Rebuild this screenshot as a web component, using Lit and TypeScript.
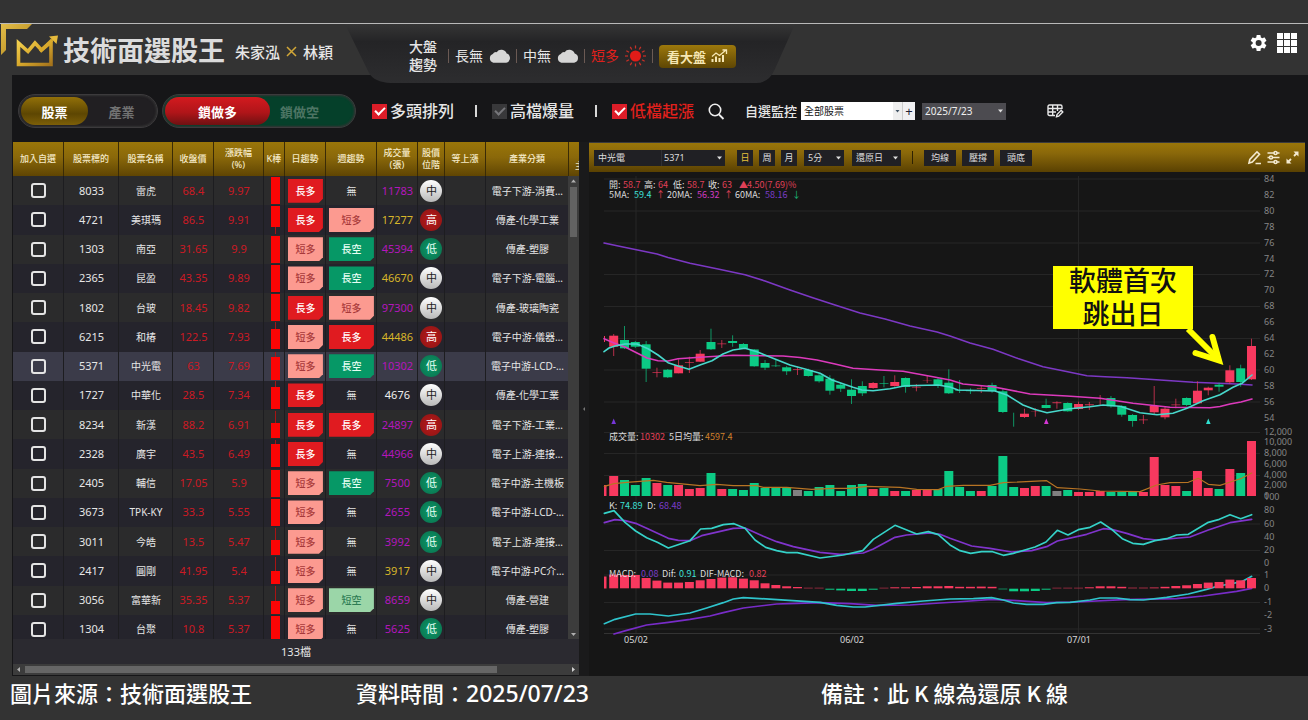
import { LitElement, html, svg, css } from "lit";
import { customElement, state } from "lit/decorators.js";
import { classMap } from "lit/directives/class-map.js";

type Row = {
  code: string; name: string; price: string; pct: string;
  k: [number, number, number, number];
  day: string; week: string; vol: string; volColor: string; level: string; sector: string;
};

const r = (
  code: string, name: string, price: string, pct: string, k: [number, number, number, number],
  day: string, week: string, vol: string, volColor: string, level: string, sector: string,
): Row => ({ code, name, price, pct, k, day, week, vol, volColor, level, sector });

const ROWS: Row[] = [
  r("8033", "雷虎", "68.4", "9.97", [1, 1, 28, 28], "長多", "無", "11783", "mag", "中", "電子下游-消費…"),
  r("4721", "美琪瑪", "86.5", "9.91", [1, 1, 22, 29], "長多", "短多", "17277", "yel", "高", "傳產-化學工業"),
  r("1303", "南亞", "31.65", "9.9", [1, 1, 28, 28], "短多", "長空", "45394", "mag", "低", "傳產-塑膠"),
  r("2365", "昆盈", "43.35", "9.89", [1, 1, 28, 28], "短多", "長空", "46670", "yel", "中", "電子下游-電腦…"),
  r("1802", "台玻", "18.45", "9.82", [1, 1, 28, 28], "長多", "短多", "97300", "mag", "中", "傳產-玻璃陶瓷"),
  r("6215", "和椿", "122.5", "7.93", [0, 7, 27, 27], "短多", "長多", "44486", "yel", "高", "電子中游-儀器…"),
  r("5371", "中光電", "63", "7.69", [0, 5, 28, 28], "短多", "長空", "10302", "mag", "低", "電子中游-LCD-…"),
  r("1727", "中華化", "28.5", "7.34", [0, 6, 28, 28], "長多", "無", "4676", "whi", "中", "傳產-化學工業"),
  r("8234", "新漢", "88.2", "6.91", [1, 13, 28, 28], "長多", "長多", "24897", "mag", "高", "電子下游-工業…"),
  r("2328", "廣宇", "43.5", "6.49", [1, 5, 28, 28], "長多", "無", "44966", "mag", "中", "電子上游-連接…"),
  r("2405", "輔信", "17.05", "5.9", [1, 1, 28, 28], "短多", "長空", "7500", "mag", "低", "電子中游-主機板"),
  r("3673", "TPK-KY", "33.3", "5.55", [1, 1, 28, 28], "短多", "無", "2655", "mag", "低", "電子中游-LCD-…"),
  r("3011", "今皓", "13.5", "5.47", [1, 13, 28, 28], "短多", "無", "3992", "mag", "低", "電子上游-連接…"),
  r("2417", "圓剛", "41.95", "5.4", [1, 15, 28, 28], "短多", "無", "3917", "yel", "中", "電子中游-PC介…"),
  r("3056", "富華新", "35.35", "5.37", [0, 15, 28, 28], "短多", "短空", "8659", "mag", "中", "傳產-營建"),
  r("1304", "台聚", "10.8", "5.37", [1, 1, 28, 28], "短多", "無", "5625", "mag", "低", "傳產-塑膠"),
];

const COLS = [51, 55, 54, 41, 50, 21, 41, 51, 41, 27, 41, 83, 10];
const HEADS = ["加入自選", "股票標的", "股票名稱", "收盤價", "漲跌幅\n(%)", "K棒", "日趨勢", "週趨勢", "成交量\n(張)", "股價\n位階", "等上漲", "產業分類", "主"];

const RED = "#f8395f";
const GREEN = "#0ccb85";

/* candle: colour, wick top, wick bottom, body top, body bottom */
const CANDLES: [string, number, number, number, number][] = [
  ["r", 334, 356, 335.7, 346.7], ["g", 326, 349, 340, 348.3], ["g", 341, 348, 342, 346.7], ["g", 341, 382, 344.3, 368.7],
  ["r", 367.7, 377.3, 372, 373], ["g", 369, 378, 369.7, 377.3], ["r", 359.3, 373.3, 365.3, 373.3], ["r", 356.7, 373, 362, 363],
  ["r", 350, 362, 353.7, 361.7], ["g", 328.7, 350, 342, 349.3], ["r", 340, 348, 343.3, 344.3], ["g", 335.3, 346.7, 341, 343],
  ["g", 343, 349, 344, 348.7], ["g", 349, 366.7, 349.5, 366.3], ["g", 360, 370, 363, 367.7], ["g", 360, 367, 365.3, 366.3],
  ["g", 366, 375, 367.3, 371.3], ["r", 366.7, 375, 369, 370], ["g", 368.7, 376.7, 370, 376], ["g", 373.3, 382.7, 375.3, 381.3],
  ["g", 375.3, 394.7, 378.7, 390.7], ["g", 382.7, 392, 384.7, 388.7], ["g", 379.3, 404, 389.7, 396], ["g", 381.3, 396, 386, 393.3],
  ["r", 382, 388.7, 383, 388], ["g", 376, 387.3, 383, 384], ["r", 375.3, 386.7, 382, 386], ["g", 377.3, 392.7, 378, 387],
  ["r", 384, 391.3, 386.7, 387.7], ["r", 375, 383, 380, 380.4], ["g", 378, 388, 379.3, 386], ["g", 369.3, 394, 382.7, 393.3],
  ["g", 380, 393, 390, 391], ["g", 388.3, 394, 390.3, 391.3], ["r", 385, 393, 388, 389], ["g", 382.7, 392.7, 385, 391],
  ["g", 388.3, 413, 391.3, 412], ["g", 412.7, 426.7, 426, 426], ["r", 408.7, 418, 413.7, 417], ["r", 408, 416.7, 411, 411.4],
  ["g", 398.7, 408.3, 405, 408], ["r", 401.3, 408.7, 402, 403.3], ["g", 402.3, 411.7, 403, 411.3], ["r", 401.7, 410, 404, 409],
  ["r", 402, 410, 404, 405.3], ["r", 395, 406, 404, 404], ["g", 396, 407.7, 398, 406.3], ["g", 405, 416.7, 406, 414.7],
  ["g", 414, 426.7, 415, 421], ["r", 415, 424, 419.3, 420.3], ["r", 386, 414.7, 406, 412.3], ["r", 406.7, 419.3, 408.7, 417.3],
  ["r", 398.7, 408.3, 404.3, 405.3], ["g", 397.3, 406, 398, 405], ["r", 381.3, 404, 390.7, 403.3], ["r", 386.7, 395.3, 387.7, 390.3],
  ["g", 382.7, 391.7, 384.7, 386.7], ["r", 365.3, 384, 370.3, 382.3], ["g", 364.7, 386.7, 368.3, 382], ["r", 338.7, 380, 346, 379.3],
];

const MA60 = "604,243 623,247 657,254 668,257.5 690,263.3 718,269 745,274.7 765,281 790,290 812,297.5 835,305 860,313 885,319 910,326 937,332 950,336 970,343 993,349.3 1018,358.5 1043,366.7 1064,371 1087,375.7 1105,376.7 1127,377.7 1160,380 1193,382.3 1237,384 1252,385";
const MA20 = "604,338.7 614,343 625,347 637,353 647,358 658,360.7 668,361 678,358.7 700,357.3 733,355.3 783,356 800,357.5 817,360 835,364 853,368.3 880,370 903,371.3 933,376.7 950,380 963,384 993,386.7 1030,394 1067,396 1100,398.3 1133,403.3 1170,407.3 1210,407.7 1220,406.5 1230,404 1241,402 1252,399";
const MA5 = "604,351.7 609,348 615,346 625,344 637,344 648,348.7 658,355 668,362.7 678,366 689,369.3 700,365 712,360.7 723,354 733,350 745,348.3 757,351.7 773,358.3 790,365 805,369 820,373.3 832,380 853,387.3 862,390 873,390.7 890,388.7 905,385.7 938,385 950,387 958,390 995,391 1007,395 1023,405 1035,409.5 1047,412.7 1070,408.7 1090,406.7 1103,405 1120,406.3 1140,412.7 1157,414.7 1173,413.3 1187,408.3 1203,400.7 1220,394.7 1233,387.3 1242,383.3 1252,375";

const VOLUMES = "r20 g16 g11 g18 r13 g11 r11 r7 r8 g23 r7 g7 g6 g13 g8 g8 g8 x6 g5 g9 g11 g5 g11 g12 r7 g8 r5 g5 r6 r7 g7 g25 g9 g5 r5 g10 g40 g9 r8 r10 g10 x5 g6 r4 r4 r5 g4 g4 g5 r4 r39 r11 r10 g5 r25 r8 g7 r27 g23 r55".split(" ");
const MACD_BARS = [13.7, 13.3, 13.3, 10.3, 7.7, 5.7, 5.7, 6.3, 8, 9.3, 10.7, 11, 9.7, 8, 5, 3.3, 2, 1.3, 0.5, 0.5, -1, -1.7, -2.3, -2.3, -1, 0.5, 1, 1, 1.3, 2, 2, 2.3, 1.5, 1.5, 1.7, 1.5, -0.6, -2.6, -2.6, -2.3, -1, 0.5, 0.5, 0.5, 1, 2, 2, 1.5, 0.6, 0.6, 0.8, 1.5, 2.3, 3, 4.3, 5.7, 6.3, 8.7, 8, 10.3];

/* indicator traces are kept in thirds of a pixel, measured from (590, 425) */
const VOL_MA = "43,184 72,176 110,172 190,166 230,172 330,182 380,178 430,182 500,182 520,187 590,187 665,193 730,190 780,190 830,184 930,187 980,193 1045,194 1070,184 1120,181 1200,181 1240,173 1370,167 1402,188 1470,192 1530,198 1650,200 1700,180 1740,173 1795,172 1825,160 1855,178 1890,181 1930,168 1955,160 1985,144";
const K_LINE = "43,265 72,257 105,292 137,318 170,338 202,352 235,369 300,347 332,312 365,310 400,299 432,296 465,310 495,345 527,367 560,377 590,383 622,383 690,399 760,390 818,377 850,343 915,301 980,327 1015,320 1045,329 1080,360 1110,377 1142,385 1175,380 1208,380 1240,391 1270,385 1335,366 1368,351 1402,316 1434,330 1465,314 1500,307 1532,291 1565,313 1597,341 1628,355 1660,358 1695,347 1730,341 1760,330 1795,328 1855,292 1888,283 1920,269 1952,281 1985,269";
const D_LINE = "43,293 75,284 105,287 140,296 170,310 235,340 265,346 300,347 335,332 430,310 465,309 520,334 560,350 610,365 690,382 750,388 820,384 850,372 915,337 950,330 1020,324 1050,328 1080,340 1145,363 1200,370 1265,381 1325,377 1370,365 1402,348 1490,328 1540,311 1565,313 1610,325 1660,341 1700,345 1800,336 1855,315 1920,293 1985,283";
const DIF_LINE = "43,596 75,583 137,567 180,567 235,573 300,564 350,549 400,533 430,522 460,518 550,523 690,532 740,541 790,546 825,546 920,535 1000,528 1080,522 1150,521 1205,518 1240,525 1270,534 1310,538 1360,538 1400,533 1440,532 1500,525 1530,519 1580,519 1620,524 1660,525 1730,517 1795,507 1850,493 1885,483 1920,477 1955,470 1985,454";
const MACD_LINE = "72,627 110,616 170,600 235,592 300,583 360,573 400,563 460,549 560,537 620,535 690,533 780,536 860,541 960,540 1050,534 1100,531 1205,523 1280,527 1370,533 1460,531 1600,524 1760,521 1840,513 1940,499 1985,490";

const barX = (i: number) => 613.7 + 10.81 * i;
const tone = (c: string) => (c === "r" ? RED : c === "g" ? GREEN : "#808080");

const LABELS: [number, [number, string, string][]][] = [
  [188, [[609, "開:", "#ddd"], [623, "58.7", "#e04058"], [644, "高:", "#ddd"], [658, "64", "#e04058"], [673, "低:", "#ddd"], [687, "58.7", "#e04058"], [708, "收:", "#ddd"], [722, "63", "#e04058"], [739, "▲", "#e04058"], [747, "4.50(7.69)%", "#e04058"]]],
  [198, [[609, "5MA:", "#ddd"], [634, "59.4", "#3fe0d8"], [656, "↑", "#e04058"], [667, "20MA:", "#ddd"], [697, "56.32", "#d03cc0"], [724, "↑", "#e04058"], [735, "60MA:", "#ddd"], [765, "58.16", "#7a3cc8"], [792, "↓", "#19b87a"]]],
  [440, [[609, "成交量:", "#ddd"], [640, "10302", "#e04058"], [669, "5日均量:", "#ddd"], [705, "4597.4", "#d0802c"]]],
  [509, [[609, "K:", "#ddd"], [620, "74.89", "#3fe0d8"], [647, "D:", "#ddd"], [659, "68.48", "#7a3cc8"]]],
  [577, [[609, "MACD:", "#ddd"], [641, "0.08", "#7a3cc8"], [662, "Dif:", "#ddd"], [679, "0.91", "#3fe0d8"], [700, "DIF-MACD:", "#ddd"], [749, "0.82", "#e04058"]]],
];

const AXIS: [number, string][] = [
  ...Array.from({ length: 16 }, (_, i): [number, string] => [179 + i * 15.9, String(84 - i * 2)]),
  [432, "12,000"], [442, "10,000"], [453, "8,000"], [464, "6,000"], [475, "4,000"], [485, "2,000"], [496, "0"], [497, "100"],
  [510, "80"], [524, "60"], [537, "40"], [550, "20"], [563, "0"],
  [575, "1"], [588, "0"], [602, "-1"], [615, "-2"], [629, "-3"],
];

@customElement("stock-chart")
export class StockChart extends LitElement {
  static styles = css`
    :host { display: block; }
    .plot { display: block; width: 100%; height: auto; }
    .label { font: 9px/9px "Noto Sans CJK TC", sans-serif; }
    .axis { font: 9px "Noto Sans", sans-serif; fill: #858585; }
    .date { font: 9px "Noto Sans", sans-serif; fill: #d8d8d8; }
    .note { font: 500 27px "Noto Sans CJK TC", sans-serif; fill: #111; }
    .line { fill: none; stroke-linejoin: round; stroke-linecap: round; }
  `;

  render() {
    return html`<svg class="plot" viewBox="589 172 716 504" role="img" aria-label="中光電 K線圖">
      <g stroke="#262626" stroke-width="1">
        ${[179, 211, 243, 274.5, 306.5, 338.5, 370, 402, 432.5, 453.5, 475.5, 524, 550.5, 575, 602.5, 629].map(
          (y) => svg`<line x1="604" x2="1260" y1=${y} y2=${y}></line>`)}
        ${[636, 1078.5].map((x) => svg`<line x1=${x} x2=${x} y1="176" y2="634"></line>`)}
        <line x1="604" x2="1260" y1="633.5" y2="633.5" stroke="#333"></line>
      </g>
      <polyline class="line" points=${MA60} stroke="#7c38c4" stroke-width="1.6"></polyline>
      ${CANDLES.map(([c, t, b, o, e], i) => svg`
        <line x1=${barX(i)} x2=${barX(i)} y1=${t} y2=${b} stroke=${tone(c)} stroke-opacity=".7"></line>
        ${e > o ? svg`<rect x=${barX(i) - 4.5} y=${o} width="9" height=${e - o} fill=${tone(c)} fill-opacity=${e - o < 1.5 ? 0.6 : 1}></rect>` : ""}`)}
      <line x1="604.5" x2="604.5" y1="336" y2="342" stroke=${RED}></line>
      <polyline class="line" points=${MA20} stroke="#dc3abc" stroke-width="1.6"></polyline>
      <polyline class="line" points=${MA5} stroke="#48d8cc" stroke-width="1.6"></polyline>
      <path d="M611.4 424L613.7 418.5L616 424Z" fill="#7636d8"></path>
      <path d="M1044 424L1046.3 418.5L1048.6 424Z" fill="#d437d4"></path>
      <path d="M1206 424L1208.3 418.5L1210.6 424Z" fill="#30e0d0"></path>

      <rect x="604" y="485" width="2.5" height="11" fill=${RED}></rect>
      ${VOLUMES.map((v, i) => svg`<rect x=${barX(i) - 4.5} y=${496 - Number(v.slice(1))} width="9" height=${v.slice(1)} fill=${tone(v[0])}></rect>`)}
      <rect x="604" y="576.5" width="2.5" height="12" fill=${RED}></rect>
      <g transform="translate(590 425) scale(.33333)" stroke-width="5">
        <polyline class="line" points=${VOL_MA} stroke="#b87424" stroke-width="3.5"></polyline>
        <polyline class="line" points=${D_LINE} stroke="#8034cc"></polyline>
        <polyline class="line" points=${K_LINE} stroke="#35d2c8"></polyline>
        <polyline class="line" points=${MACD_LINE} stroke="#782cc8"></polyline>
        <polyline class="line" points=${DIF_LINE} stroke="#2fc4cc"></polyline>
      </g>
      ${MACD_BARS.map((v, i) => svg`<rect x=${barX(i) - 4.5} y=${v >= 0 ? 588.3 - v : 588.7} width="9" height=${Math.abs(v)} fill=${v >= 0 ? RED : GREEN}></rect>`)}

      ${LABELS.map(([y, parts]) => svg`<text class="label" y=${y}>${parts.map(([x, t, c]) => svg`<tspan x=${x} fill=${c}>${t}</tspan>`)}</text>`)}
      ${AXIS.map(([y, t]) => svg`<text class="axis" x="1264" y=${y + 3}>${t}</text>`)}
      <text class="date" x="624" y="643">05/02</text>
      <text class="date" x="840" y="643">06/02</text>
      <text class="date" x="1067" y="643">07/01</text>

      <rect x="1053" y="266" width="140" height="63" fill="#ffff00"></rect>
      <text class="note" x="1123" y="291" text-anchor="middle">軟體首次</text>
      <text class="note" x="1123" y="324" text-anchor="middle">跳出日</text>
      <path d="M1188 329L1217 358" fill="none" stroke="#ffff00" stroke-width="6"></path>
      <path d="M1212.500 337L1219 360.500L1195.500 353" fill="none" stroke="#ffff00" stroke-width="6" stroke-linecap="round"></path>
    </svg>`;
  }
}

@customElement("stock-table")
export class StockTable extends LitElement {
  static styles = css`
    :host { display: block; }
    .frame { position: relative; height: 497px; overflow: hidden; }
    .grid { width: 100%; height: 502px; table-layout: fixed; border-collapse: separate; border-spacing: 0; }
    th { height: 34px; padding: 0; overflow: hidden; font-size: 9px; line-height: 12px; font-weight: 500; color: #f4e9c6; white-space: pre-line;
      background: linear-gradient(#9a7609, #8a680a 45%, #5f4503); border-right: 1px solid #3a2b06; box-sizing: border-box; }
    th:last-child { text-align: left; text-indent: 6px; vertical-align: bottom; padding-bottom: 4px; white-space: nowrap; border-right: 0; }
    td { height: 29px; padding: 0 0 0 1px; text-align: center; overflow: hidden; white-space: nowrap; box-sizing: border-box;
      border-right: 1px solid #1d1d20; background: #2b2b2c; font-size: 11px; line-height: 16px; }
    tr:nth-child(even) td { background: #25242c; }
    tr.current td { background: #3b3b49; }
    td.han, .han { font-size: 10px; }
    .up { color: #cb1a24; }
    .mag { color: #b416bc; } .yel { color: #d8b62a; } .whi { color: #eee; }
    .pick { appearance: none; display: block; width: 15px; height: 15px; margin: 0 auto; border: 2px solid #e4e4e4; border-radius: 3px; background: transparent; }
    .kbar { display: block; width: 9px; height: 29px; margin: 0 0 0 6px; }
    .tag { display: block; height: 24px; margin: 0 2px; line-height: 24px; font-size: 10px; font-weight: 500;
      clip-path: polygon(0 0, 100% 0, 100% calc(100% - 4px), calc(100% - 4px) 100%, 0 100%); }
    .ll { background: #e01b20; color: #fff; }
    .sl { background: #fc9a90; color: #a8393a; }
    .ls { background: #069866; color: #e8fff4; }
    .ss { background: #9bd6a8; color: #2f7d55; }
    .level { display: block; width: 22px; height: 22px; margin: 0 auto; border-radius: 50%; line-height: 22px; font-size: 11px; }
    .mid { background: linear-gradient(#fff, #b9b9b9); color: #222; }
    .high { background: radial-gradient(#b81a1a, #8c1414); color: #fff; }
    .low { background: radial-gradient(#0b9a68, #0a6e4c); color: #e8fff4; }
    .vscroll { position: absolute; top: 34px; right: 0; bottom: 0; width: 11px; background: #3c3c3c; display: flex; flex-direction: column; align-items: center; justify-content: space-between; }
    .vthumb { width: 7px; height: 50px; margin-top: 2px; background: #626262; }
    .arrow { display: block; width: 7px; height: 9px; }
    .spring { flex: 1; }
    .total { height: 25px; line-height: 25px; text-align: center; background: #2b2a30; font-size: 11px; }
    .hscroll { display: flex; align-items: center; height: 11px; background: #3c3c3c; padding: 0 2px; gap: 3px; }
    .hthumb { flex: 0 0 84%; height: 7px; background: #666; }
    .side { width: 7px; height: 9px; }
  `;

  private tag(kind: string) {
    const cls: Record<string, string> = { 長多: "ll", 短多: "sl", 長空: "ls", 短空: "ss" };
    return cls[kind] ? html`<span class="tag ${cls[kind]}">${kind}</span>` : html`<span class="han">${kind}</span>`;
  }

  render() {
    const level: Record<string, string> = { 中: "mid", 高: "high", 低: "low" };
    return html`
      <div class="frame">
        <table class="grid">
          <colgroup>${COLS.map((w) => html`<col style="width:${(w / 566) * 100}%">`)}</colgroup>
          <thead><tr>${HEADS.map((h) => html`<th scope="col">${h}</th>`)}</tr></thead>
          <tbody>
            ${ROWS.map((d) => html`<tr class=${classMap({ current: d.code === "5371" })}>
              <td><input class="pick" type="checkbox" aria-label="加入自選 ${d.name}"></td>
              <td>${d.code}</td>
              <td class="han">${d.name}</td>
              <td class="up">${d.price}</td>
              <td class="up">${d.pct}</td>
              <td><svg class="kbar" viewBox="0 0 9 29"><rect x="4" y=${d.k[0]} width="1" height=${d.k[3] - d.k[0]} fill="#a81414"></rect><rect width="9" y=${d.k[1]} height=${d.k[2] - d.k[1]} fill="#fb0505"></rect></svg></td>
              <td>${this.tag(d.day)}</td>
              <td>${this.tag(d.week)}</td>
              <td class=${d.volColor}>${d.vol}</td>
              <td><span class="level ${level[d.level]}">${d.level}</span></td>
              <td></td>
              <td class="han">${d.sector}</td>
              <td></td>
            </tr>`)}
          </tbody>
        </table>
        <div class="vscroll">
          <svg class="arrow" viewBox="0 0 7 9"><path d="M1 6.500L3.500 3.500L6 6.500Z" fill="#b0b0b0"></path></svg>
          <div class="vthumb"></div>
          <div class="spring"></div>
          <svg class="arrow" viewBox="0 0 7 9"><path d="M1 3L3.500 6L6 3Z" fill="#b0b0b0"></path></svg>
        </div>
      </div>
      <div class="total">133檔</div>
      <div class="hscroll">
        <svg class="side" viewBox="0 0 7 9"><path d="M5 2L2 4.500L5 7Z" fill="#b0b0b0"></path></svg>
        <div class="hthumb"></div>
        <div class="spring"></div>
        <svg class="side" viewBox="0 0 7 9"><path d="M2 2L5 4.500L2 7Z" fill="#d0d0d0"></path></svg>
      </div>`;
  }
}

const cloud = svg`<path d="M5.500 15A4.800 4.800 0 0 1 5 5.900A4 4 0 0 1 9 4A6 6 0 0 1 19.500 5.500A4.900 4.900 0 0 1 19 15Z" fill="#d6d6d6"></path>`;

@customElement("app-root")
export class AppRoot extends LitElement {
  @state() private side = "股票";

  static styles = css`
    :host { display: block; min-height: 100vh; background: #333; color: #e6e6e6; font-family: "Noto Sans", "Noto Sans CJK TC", sans-serif; overflow: hidden; }
    * { box-sizing: border-box; }
    button, select { font-family: inherit; color: inherit; border: 0; padding: 0; margin: 0; cursor: pointer; }
    select { appearance: none; border-radius: 0; }
    .app { position: relative; margin-top: 23px; border-top: 1px solid #b9b9b9; }
    .corner { position: absolute; top: 0; left: 1px; width: 31px; height: 31px; }
    .top { display: flex; height: 51px; padding-left: 16px; padding-right: 11px; }
    .brand { display: flex; align-items: center; width: 329px; height: 54px; }
    .crown { width: 42px; height: 34px; }
    .title { margin: 0 10px 0 5px; font-size: 27px; line-height: 32px; font-weight: 700; color: #dcdcdc; }
    .names { display: flex; align-items: center; gap: 6px; font-size: 15px; font-weight: 500; }
    .cross { width: 11px; height: 11px; }
    .market { position: relative; width: 450px; height: 60px; display: flex; align-items: center; padding: 4px 0 0 64px; font-size: 14px; }
    .tray { position: absolute; inset: 0; width: 450px; height: 60px; }
    .item { position: relative; display: flex; align-items: center; gap: 5px; padding: 0 5px 0 6px; border-left: 1px solid #6b5a54; line-height: 14px; height: 14px; }
    .item:nth-of-type(1) { border: 0; }
    .item.trend { display: block; width: 39px; height: 36px; padding: 0; line-height: 18px; font-weight: 500; }
    .hot { color: #e0201c; }
    .cloud { width: 23px; height: 16px; flex: none; }
    .sun { width: 23px; height: 24px; flex: none; }
    .look { display: flex; align-items: center; gap: 5px; height: 23px; padding: 0 8px; border-radius: 4px; background: linear-gradient(#9c780c, #5e4604); font-size: 13px; font-weight: 700; color: #f6e7b4; }
    .tools { display: flex; gap: 9px; margin-left: auto; padding-top: 9px; }
    .icon { background: none; display: block; }
    .tools .icon { height: 20px; }
    .icon svg { display: block; }
    .work { margin-left: 12px; padding-left: 1px; background: #161618; }
    .filters { display: flex; align-items: center; height: 67px; padding: 10px 0 5px 5px; }
    .pill { display: flex; height: 34px; padding: 2px; border-radius: 17px; border: 1px solid #3c3a3c; background: #211f22; box-shadow: inset 0 0 2px 1px #333; }
    .pill button { height: 28px; border-radius: 14px; font-size: 13px; font-weight: 700; background: none; color: #727272; }
    .kinds { width: 140px; margin-right: 4px; }
    .kinds button { flex: 1; }
    .kinds .on { background: linear-gradient(#927009, #5d4602 60%, #7d5f08); color: #fff; }
    .locks { width: 194px; background: #05402a; margin-right: 16px; }
    .locks .long { width: 105px; background: linear-gradient(#d31a1f, #b01519 55%, #6e1112); color: #fff; }
    .locks .short { padding-left: 10px; color: #4d7564; }
    .check { display: flex; align-items: center; gap: 3px; font-size: 16px; line-height: 20px; font-weight: 500; }
    .box { appearance: none; width: 15px; height: 15px; margin: 0; background: #38383a; display: grid; place-items: center; }
    .box::after { content: ""; width: 8px; height: 4px; margin-top: -3px; border: solid #76767a; border-width: 0 0 2px 2px; rotate: -45deg; }
    .box:checked { background: #dc1d28; }
    .box:checked::after { border-color: #fff; }
    .bar { width: 2px; height: 12px; margin: 0 15px 0 21px; background: #d8d8d8; }
    .find { margin: 0 20px 0 14px; }
    .watch { font-size: 13px; line-height: 18px; margin-right: 4px; font-weight: 500; }
    .all { display: flex; width: 114px; height: 18px; background: #fff; color: #111; margin-right: 7px; }
    .all select { width: 101px; padding-left: 3px; font-size: 10px; color: #111; background: #fff url('data:image/svg+xml,<svg xmlns="http://www.w3.org/2000/svg" width="9" height="18"><rect width="9" height="18" fill="%23eee"/><path d="M2.500 8h4L4.500 10.500z" fill="%23456"/></svg>') right / 9px 18px no-repeat; }
    .all button { flex: 1; background: #f0f0f2; border-left: 1px solid #ccc; color: #223; font-size: 13px; line-height: 16px; }
    .date { width: 84px; height: 17px; padding-left: 3px; font-size: 10px; background-color: #4c4b50; color: #eee; }
    .caret { background-image: url('data:image/svg+xml,<svg xmlns="http://www.w3.org/2000/svg" width="9" height="8"><path d="M2 2.500h5L4.500 5.500z" fill="%23ddd"/></svg>'); background-repeat: no-repeat; background-position: right 1px center; }
    .edit { margin-left: 41px; }
    .panels { display: grid; grid-template-columns: 566fr 10fr 716fr 3fr; }
    .split { background: #1a1a1b; display: flex; align-items: center; justify-content: center; }
    .chart { background: #161616; border-top: 1px solid #3a3a3c; }
    .toolbar { display: flex; align-items: center; height: 29px; padding: 0 5px; background: linear-gradient(#9a7609, #8a680a 35%, #5a4102); font-size: 9px; color: #ddd; }
    .toolbar select, .toolbar .chip { height: 16px; background-color: #202024; font-size: 9px; }
    .stock { display: flex; margin-right: 12px; }
    .stock .who { width: 68px; padding-left: 4px; border-right: 1px solid #303034; }
    .stock .num { width: 63px; padding-left: 2px; }
    .chip { width: 32px; margin-right: 6px; }
    .chip.sq { width: 16px; }
    .toolbar .on { color: #e8c23c; }
    .mins { width: 40px; margin: 0 8px 0 1px; padding-left: 4px; }
    .basis { width: 49px; padding-left: 4px; }
    .rule { width: 1px; height: 13px; margin: 0 11px; background: #2e2203; }
    .right { display: flex; gap: 4px; margin-left: auto; }
    .caption { display: grid; grid-template-columns: 346fr 465fr 487fr; padding: 0 0 0 10px; margin: 0; font-size: 22px; line-height: 32px; color: #fff; font-weight: 500; }
    .caption p { margin: 0; white-space: nowrap; font-family: "Noto Sans CJK TC", sans-serif; }
    .stamp { font-family: "Noto Sans", sans-serif; font-size: 23px; }
  `;

  render() {
    const rays = Array.from({ length: 12 }, (_, i) => i * 30);
    return html`
      <div class="app">
        <svg class="corner" viewBox="0 0 31 31"><defs><linearGradient id="au" x2="1" y2="1"><stop offset="0" stop-color="#e2bd4a"></stop><stop offset="1" stop-color="#b08418"></stop></linearGradient></defs>
          <path d="M0 0H31L26 5H5V26L0 31Z" fill="url(#au)"></path></svg>
        <header class="top">
          <div class="brand">
            <svg class="crown" viewBox="0 0 42 34"><defs><linearGradient id="gold" x2="1" y2="1"><stop offset="0" stop-color="#f2cf4e"></stop><stop offset=".5" stop-color="#d8a92c"></stop><stop offset="1" stop-color="#a5741c"></stop></linearGradient></defs>
              <path d="M2.500 30.500V9L12 17.500L19 9L25.500 16L35 8V30.500Z" fill="none" stroke="url(#gold)" stroke-width="3.600"></path>
              <path d="M24 17.500L36 6" stroke="#d8a92c" stroke-width="3.200"></path><path d="M33 2.500L42 1.500L40.500 10Z" fill="#e5ba3c"></path></svg>
            <div class="title">技術面選股王</div>
            <div class="names"><span>朱家泓</span><svg class="cross" viewBox="0 0 11 11"><path d="M1 1L10 10M10 1L1 10" stroke="#d2a737" stroke-width="1.500"></path></svg><span>林穎</span></div>
          </div>
          <div class="market">
            <svg class="tray" viewBox="0 0 450 60"><defs><linearGradient id="tray" x2="0" y2="1"><stop offset="0" stop-color="#353535"></stop><stop offset=".3" stop-color="#242426"></stop><stop offset="1" stop-color="#2d2d2f"></stop></linearGradient></defs>
              <path d="M0 0H450L430 45Q424 59 411 59H46Q29 58 24 49Z" fill="url(#tray)"></path></svg>
            <div class="item trend">大盤<br>趨勢</div>
            <div class="item">長無<svg class="cloud" viewBox="0 0 24 16">${cloud}</svg></div>
            <div class="item">中無<svg class="cloud" viewBox="0 0 24 16">${cloud}</svg></div>
            <div class="item hot">短多<svg class="sun" viewBox="0 0 24 24"><circle cx="12" cy="12" r="5.800" fill="#e21c18"></circle>
              ${rays.map((a) => svg`<path d="M12 1V4.200" stroke="#c83028" stroke-width="1.300" transform="rotate(${a} 12 12)"></path>`)}</svg></div>
            <div class="item"><button class="look">看大盤<svg width="17" height="14" viewBox="0 0 17 14"><path d="M1.500 13V10M5 13V7.500M8.500 13V9M12 13V6" stroke="#f6e7b4" stroke-width="2"></path><path d="M1 7.500L5 4L8.500 6.500L15 1M11.500 1H15.500V5" fill="none" stroke="#f6e7b4" stroke-width="1.300"></path></svg></button></div>
          </div>
          <div class="tools">
            <button class="icon" aria-label="設定"><svg width="18" height="20" viewBox="0 0 24 24"><path fill="#fff" d="M19.400 13a7.500 7.500 0 0 0 0-2l2.300-1.700a.6.6 0 0 0 .1-.7l-2.200-3.800a.6.6 0 0 0-.7-.2l-2.700 1.100a8 8 0 0 0-1.700-1L14 1.800a.6.6 0 0 0-.6-.5H9.300a.6.6 0 0 0-.5.500l-.4 2.900a8 8 0 0 0-1.700 1L4 4.600a.6.6 0 0 0-.7.200L1.100 8.600a.6.6 0 0 0 .1.700L3.600 11a7.500 7.500 0 0 0 0 2l-2.400 1.700a.6.6 0 0 0-.1.700l2.200 3.800c.1.2.4.3.7.200l2.700-1.100a8 8 0 0 0 1.700 1l.4 2.900c0 .3.300.5.500.5h4.100c.3 0 .6-.2.600-.5l.4-2.900a8 8 0 0 0 1.700-1l2.700 1.100c.3.1.6 0 .7-.2l2.200-3.800a.6.6 0 0 0-.1-.7ZM11.500 16a4 4 0 1 1 0-8 4 4 0 0 1 0 8Z"></path></svg></button>
            <button class="icon" aria-label="選單"><svg width="20" height="20" viewBox="0 0 20 20" fill="#fff">${[0, 7, 14].map((y) => [0, 7, 14].map((x) => svg`<rect x=${x} y=${y} width="6" height="6"></rect>`))}</svg></button>
          </div>
        </header>

        <main class="work">
          <div class="filters">
            <div class="pill kinds">${["股票", "產業"].map((k) => html`<button class=${classMap({ on: this.side === k })} @click=${() => (this.side = k)}>${k}</button>`)}</div>
            <div class="pill locks"><button class="long">鎖做多</button><button class="short">鎖做空</button></div>
            <label class="check"><input class="box" type="checkbox" checked>多頭排列</label>
            <span class="bar"></span>
            <label class="check"><input class="box" type="checkbox">高檔爆量</label>
            <span class="bar"></span>
            <label class="check hot"><input class="box" type="checkbox" checked>低檔起漲</label>
            <button class="icon find" aria-label="搜尋"><svg width="17" height="17" viewBox="0 0 17 17"><circle cx="7" cy="7" r="5.700" fill="none" stroke="#eee" stroke-width="1.600"></circle><path d="M11 11.500L15.500 16" stroke="#eee" stroke-width="1.800"></path></svg></button>
            <label class="watch" for="watch">自選監控</label>
            <div class="all"><select id="watch"><option>全部股票</option></select><button aria-label="新增">+</button></div>
            <select class="date caret" aria-label="日期"><option>2025/7/23</option></select>
            <button class="icon edit" aria-label="編輯欄位"><svg width="17" height="14" viewBox="0 0 17 14" fill="none" stroke="#e8e8e8" stroke-width="1.400"><path d="M8 11.500H2.500Q1 11.500 1 10V2.500Q1 1 2.500 1H13.500Q15 1 15 2.500V5M1 4.500H14.500M1 8H9M5.700 1V11.500M10.500 1V7"></path><path d="M9.500 12.700L10 10.500L14.200 6.300L15.800 7.900L11.700 12.200Z"></path></svg></button>
          </div>

          <div class="panels">
            <stock-table></stock-table>
            <div class="split"><svg width="4" height="6" viewBox="0 0 4 6"><path d="M3 1L1 3L3 5Z" fill="#777"></path></svg></div>
            <section class="chart">
              <div class="toolbar">
                <div class="stock"><select class="who" aria-label="股票名稱"><option>中光電</option></select><select class="num caret" aria-label="股票代號"><option>5371</option></select></div>
                <button class="chip sq on">日</button><button class="chip sq">周</button><button class="chip sq">月</button>
                <select class="mins caret" aria-label="分鐘"><option>5分</option></select>
                <select class="basis caret" aria-label="還原"><option>還原日</option></select>
                <span class="rule"></span>
                <button class="chip">均線</button><button class="chip">壓撐</button><button class="chip">頭底</button>
                <div class="right">
                  <button class="icon" aria-label="畫線"><svg width="15" height="15" viewBox="0 0 15 15" fill="none" stroke="#f4ead0" stroke-width="1.600"><path d="M2 13L2.800 9.500L10 1.800L12.500 4.200L5.300 12Z M8.500 13.500H14"></path></svg></button>
                  <button class="icon" aria-label="參數"><svg width="15" height="15" viewBox="0 0 15 15" stroke="#f4ead0" stroke-width="1.600" fill="#7d5f08"><path d="M1.500 3H13.500M1.500 7.500H13.500M1.500 12H13.500"></path><circle cx="9.500" cy="3" r="1.500"></circle><circle cx="5" cy="7.500" r="1.500"></circle><circle cx="9.500" cy="12" r="1.500"></circle></svg></button>
                  <button class="icon" aria-label="放大"><svg width="15" height="15" viewBox="0 0 15 15" stroke="#f4ead0" fill="#f4ead0"><path d="M3 12L6 9M9 6L12 3" stroke-width="1.800"></path><path d="M8.500 1.500H13.500V6.500ZM1.500 8.500V13.500H6.500Z" stroke="none"></path></svg></button>
                </div>
              </div>
              <stock-chart></stock-chart>
            </section>
          </div>
        </main>

        <footer class="caption">
          <p>圖片來源：技術面選股王</p>
          <p>資料時間：<span class="stamp">2025/07/23</span></p>
          <p>備註：此 K 線為還原 K 線</p>
        </footer>
      </div>`;
  }
}
